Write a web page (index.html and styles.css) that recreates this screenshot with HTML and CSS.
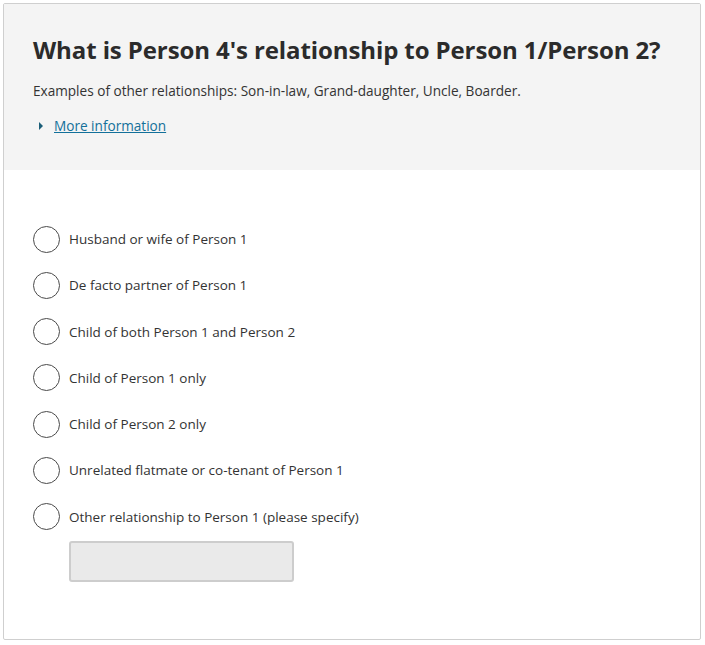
FILE: index.html
```html
<!DOCTYPE html>
<html>
<head>
<meta charset="utf-8">
<link rel="stylesheet" href="styles.css">
</head>
<body>
<div class="card">
  <div class="header">
    <h1 class="title">What is Person 4's relationship to Person 1/Person 2?</h1>
    <p class="desc">Examples of other relationships: Son-in-law, Grand-daughter, Uncle, Boarder.</p>
    <div class="more">
      <span class="tri"></span>
      <a class="more-link" href="#">More information</a>
    </div>
  </div>
  <div class="options">
    <label class="opt"><span class="radio"></span><span class="opt-text">Husband or wife of Person 1</span></label>
    <label class="opt"><span class="radio"></span><span class="opt-text">De facto partner of Person 1</span></label>
    <label class="opt"><span class="radio"></span><span class="opt-text">Child of both Person 1 and Person 2</span></label>
    <label class="opt"><span class="radio"></span><span class="opt-text">Child of Person 1 only</span></label>
    <label class="opt"><span class="radio"></span><span class="opt-text">Child of Person 2 only</span></label>
    <label class="opt"><span class="radio"></span><span class="opt-text">Unrelated flatmate or co-tenant of Person 1</span></label>
    <label class="opt"><span class="radio"></span><span class="opt-text">Other relationship to Person 1 (please specify)</span></label>
    <div class="specify"><div class="field"></div></div>
  </div>
</div>
</body>
</html>
```
FILE: styles.css
```css
html, body {
  margin: 0;
  padding: 0;
  background: #fff;
}
body {
  padding: 3px 3px 0 3px;
  font-family: "Open Sans", "Noto Sans", sans-serif;
  color: #333;
}
.card {
  width: 696px;
  height: 635px;
  border: 1px solid #cfcfcf;
  border-radius: 2px;
  box-sizing: content-box;
  overflow: hidden;
}
.header {
  background: #f4f4f4;
  height: 166px;
  padding: 0 29px;
  box-sizing: border-box;
  display: flex;
  flex-direction: column;
}
.title {
  margin: 29px 0 0 0;
  font-size: 24px;
  line-height: 34px;
  font-weight: 700;
  color: #2b2b2b;
  letter-spacing: -0.1px;
}
.desc {
  margin: 14px 0 0 0;
  font-size: 13.6px;
  line-height: 20px;
}
.more {
  margin-top: 15px;
  display: flex;
  align-items: center;
  gap: 11px;
  padding-left: 6px;
}
.tri {
  width: 0;
  height: 0;
  border-top: 4px solid transparent;
  border-bottom: 4px solid transparent;
  border-left: 4px solid #1b5e78;
}
.more-link {
  font-size: 13.6px;
  line-height: 20px;
  color: #13709a;
  text-decoration: underline;
}
.options {
  padding: 55px 29px 0 29px;
  display: flex;
  flex-direction: column;
  gap: 18.3px;
}
.opt {
  display: flex;
  align-items: center;
  gap: 9px;
  height: 28px;
}
.radio {
  width: 25px;
  height: 25px;
  border: 1.5px solid #4a4a4a;
  border-radius: 50%;
  flex: none;
}
.opt-text {
  font-size: 13.5px;
  line-height: 20px;
  color: #333;
}
.specify {
  padding-left: 36px;
  margin-top: -8px;
}
.field {
  width: 225px;
  height: 41px;
  box-sizing: border-box;
  border: 2px solid #cdcdcd;
  border-radius: 3px;
  background: #eaeaea;
}
```
